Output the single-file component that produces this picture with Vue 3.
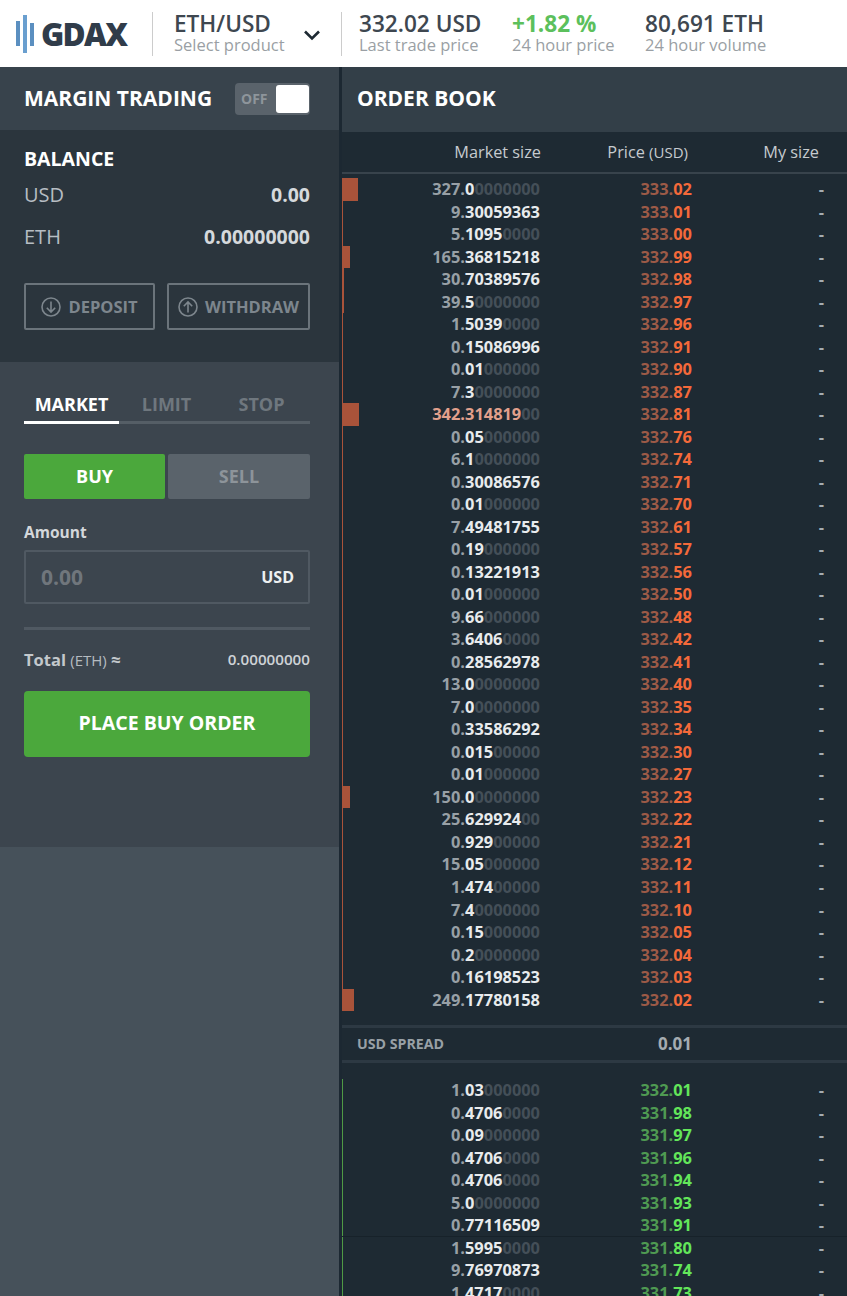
<template>
  <div class="page">
    <header class="topbar">
      <div class="logo">
        <svg class="logo-bars" width="18" height="38" viewBox="0 0 18 38">
          <rect x="0" y="6" width="4" height="25" fill="#5b8fc0" />
          <rect x="7" y="0" width="4" height="38" fill="#6a9fcf" />
          <rect x="14" y="8" width="4" height="23" fill="#5b8fc0" />
        </svg>
        <span class="logo-text">GDAX</span>
      </div>
      <div class="sep"></div>
      <div class="product">
        <div class="stat">
          <div class="stat-value">ETH/USD</div>
          <div class="stat-label">Select product</div>
        </div>
        <svg class="chevron" width="18" height="12" viewBox="0 0 18 12">
          <path d="M2 2.5 L9 9.5 L16 2.5" fill="none" stroke="#1e2a33" stroke-width="2.6" />
        </svg>
      </div>
      <div class="sep"></div>
      <div class="stat stat-price">
        <div class="stat-value">332.02 USD</div>
        <div class="stat-label">Last trade price</div>
      </div>
      <div class="stat stat-change">
        <div class="stat-value green">+1.82 %</div>
        <div class="stat-label">24 hour price</div>
      </div>
      <div class="stat">
        <div class="stat-value">80,691 ETH</div>
        <div class="stat-label">24 hour volume</div>
      </div>
    </header>

    <div class="main">
      <aside class="sidebar">
        <div class="margin-head">
          <span class="panel-title">MARGIN TRADING</span>
          <div class="toggle">
            <span>OFF</span>
            <div class="knob"></div>
          </div>
        </div>

        <section class="balance">
          <h3>BALANCE</h3>
          <div class="balance-row"><span>USD</span><b>0.00</b></div>
          <div class="balance-row"><span>ETH</span><b>0.00000000</b></div>
          <div class="balance-actions">
            <button class="outline deposit">
              <svg width="20" height="20" viewBox="0 0 20 20">
                <circle cx="10" cy="10" r="9" fill="none" stroke="#7d868d" stroke-width="1.6" />
                <path d="M10 4.5 V15 M5.8 10.8 L10 15 L14.2 10.8" fill="none" stroke="#7d868d" stroke-width="1.6" />
              </svg>
              DEPOSIT
            </button>
            <button class="outline withdraw">
              <svg width="20" height="20" viewBox="0 0 20 20">
                <circle cx="10" cy="10" r="9" fill="none" stroke="#7d868d" stroke-width="1.6" />
                <path d="M10 15.5 V5 M5.8 9.2 L10 5 L14.2 9.2" fill="none" stroke="#7d868d" stroke-width="1.6" />
              </svg>
              WITHDRAW
            </button>
          </div>
        </section>

        <section class="order-form">
          <div class="tabs">
            <div class="tab active">MARKET</div>
            <div class="tab">LIMIT</div>
            <div class="tab">STOP</div>
          </div>
          <div class="side-switch">
            <button class="side buy">BUY</button>
            <button class="side sell">SELL</button>
          </div>
          <label class="amount-label">Amount</label>
          <div class="amount">
            <span class="placeholder">0.00</span>
            <span class="unit">USD</span>
          </div>
          <div class="rule"></div>
          <div class="total">
            <span><b>Total</b> <small>(ETH)</small> <b class="approx">≈</b></span>
            <b class="total-value">0.00000000</b>
          </div>
          <button class="place">PLACE BUY ORDER</button>
        </section>
      </aside>

      <main class="book">
        <div class="book-title"><span class="panel-title">ORDER BOOK</span></div>
        <div class="book-cols">
          <span class="col-size">Market size</span>
          <span class="col-price">Price <small>(USD)</small></span>
          <span class="col-mine">My size</span>
        </div>

        <div class="rows asks">
          <div v-for="row in asks" :key="row.price" class="row" :class="{ flash: row.size.startsWith('342') }">
            <div class="bar" :style="{ width: barWidth(row.size) + 'px' }"></div>
            <span class="size">
              <i class="dim">{{ parts(row.size).whole }}</i>{{ parts(row.size).digits }}<i class="faint">{{ parts(row.size).zeros }}</i>
            </span>
            <span class="price"><i>{{ row.price.slice(0, 4) }}</i>{{ row.price.slice(4) }}</span>
            <span class="mine">-</span>
          </div>
        </div>

        <div class="spread">
          <span class="spread-label">USD SPREAD</span>
          <span class="spread-value">0.01</span>
        </div>

        <div class="rows bids">
          <div v-for="row in bids" :key="row.price" class="row" :class="{ seam: row.price === '331.80' }">
            <div class="bar" :style="{ width: barWidth(row.size) + 'px' }"></div>
            <span class="size">
              <i class="dim">{{ parts(row.size).whole }}</i>{{ parts(row.size).digits }}<i class="faint">{{ parts(row.size).zeros }}</i>
            </span>
            <span class="price"><i>{{ row.price.slice(0, 4) }}</i>{{ row.price.slice(4) }}</span>
            <span class="mine">-</span>
          </div>
        </div>
      </main>
    </div>
  </div>
</template>

<script setup>
const toRows = (list) => list.map(([size, price]) => ({ size, price }))

const asks = toRows([
  ['327.00000000', '333.02'],
  ['9.30059363', '333.01'],
  ['5.10950000', '333.00'],
  ['165.36815218', '332.99'],
  ['30.70389576', '332.98'],
  ['39.50000000', '332.97'],
  ['1.50390000', '332.96'],
  ['0.15086996', '332.91'],
  ['0.01000000', '332.90'],
  ['7.30000000', '332.87'],
  ['342.31481900', '332.81'],
  ['0.05000000', '332.76'],
  ['6.10000000', '332.74'],
  ['0.30086576', '332.71'],
  ['0.01000000', '332.70'],
  ['7.49481755', '332.61'],
  ['0.19000000', '332.57'],
  ['0.13221913', '332.56'],
  ['0.01000000', '332.50'],
  ['9.66000000', '332.48'],
  ['3.64060000', '332.42'],
  ['0.28562978', '332.41'],
  ['13.00000000', '332.40'],
  ['7.00000000', '332.35'],
  ['0.33586292', '332.34'],
  ['0.01500000', '332.30'],
  ['0.01000000', '332.27'],
  ['150.00000000', '332.23'],
  ['25.62992400', '332.22'],
  ['0.92900000', '332.21'],
  ['15.05000000', '332.12'],
  ['1.47400000', '332.11'],
  ['7.40000000', '332.10'],
  ['0.15000000', '332.05'],
  ['0.20000000', '332.04'],
  ['0.16198523', '332.03'],
  ['249.17780158', '332.02'],
])

const bids = toRows([
  ['1.03000000', '332.01'],
  ['0.47060000', '331.98'],
  ['0.09000000', '331.97'],
  ['0.47060000', '331.96'],
  ['0.47060000', '331.94'],
  ['5.00000000', '331.93'],
  ['0.77116509', '331.91'],
  ['1.59950000', '331.80'],
  ['9.76970873', '331.74'],
  ['1.47170000', '331.73'],
])

// whole part is dimmed, trailing zeros are almost invisible
const parts = (size) => {
  const [int, dec] = size.split('.')
  let digits = dec.replace(/0+$/, '')
  if (!digits) digits = '0'
  return { whole: int + '.', digits, zeros: dec.slice(digits.length) }
}

const barWidth = (size) => Math.max(1, Math.round(parseFloat(size) * 0.05))
</script>

<style>
html, body {
  margin: 0;
  overflow: hidden;
}
</style>

<style scoped>
.page {
  width: 847px;
  height: 1296px;
  overflow: hidden;
  font-family: "Open Sans", "Noto Sans", sans-serif;
  display: flex;
  flex-direction: column;
  background: #1e2a33;
}

.topbar {
  height: 67px;
  flex: none;
  background: #fff;
  display: flex;
  align-items: center;
  padding-left: 16px;
  box-sizing: border-box;
}

.logo {
  display: flex;
  align-items: center;
  width: 136px;
  flex: none;
}

.logo-bars {
  flex: none;
}

.logo-text {
  margin-left: 7px;
  font-size: 31.5px;
  font-weight: 800;
  letter-spacing: -1.7px;
  color: #303c4a;
}

.sep {
  width: 1px;
  height: 44px;
  background: #ccc;
  flex: none;
}

.product {
  display: flex;
  align-items: center;
  width: 188px;
  flex: none;
  padding-left: 21px;
  box-sizing: border-box;
}

.chevron {
  flex: none;
  margin-left: 18px;
  margin-top: 2px;
}

.stat {
  flex: none;
  margin-top: -2px;
}

.stat-price {
  margin-left: 17px;
  width: 153px;
}

.stat-change {
  width: 133px;
}

.stat-value {
  font-size: 22.6px;
  font-weight: 600;
  line-height: 24px;
  color: #3e4750;
  white-space: nowrap;
}

.stat-value.green {
  font-weight: 700;
  color: #5cc05c;
}

.stat-label {
  font-size: 16.5px;
  line-height: 18px;
  color: #9a9fa4;
  white-space: nowrap;
}

.main {
  flex: 1;
  display: flex;
  min-height: 0;
}

.sidebar {
  width: 339px;
  flex: none;
  background: #46515a;
  border-right: 3px solid #1c2832;
}

.panel-title {
  display: block;
  margin-bottom: 2px;
  line-height: 28px;
  font-size: 21px;
  font-weight: 700;
  color: #fff;
}

.margin-head {
  height: 63px;
  background: #38434c;
  display: flex;
  align-items: center;
  justify-content: space-between;
  padding: 0 29px 0 24px;
}

.toggle {
  width: 75px;
  height: 32px;
  background: #5a636b;
  border-radius: 4px;
  display: flex;
  align-items: center;
  justify-content: space-between;
  padding: 0 1px 0 6px;
  box-sizing: border-box;
  font-size: 14px;
  font-weight: 700;
  color: #8e959b;
}

.knob {
  width: 33px;
  height: 28px;
  background: #fff;
  border-radius: 3px;
}

.balance {
  height: 232px;
  box-sizing: border-box;
  background: #2b353d;
  padding: 16px 29px 0 24px;
}

.balance h3 {
  margin: 0 0 9px;
  font-size: 19.5px;
  line-height: 26px;
  font-weight: 700;
  color: #fff;
}

.balance-row {
  display: flex;
  justify-content: space-between;
  align-items: center;
  height: 26px;
  margin-bottom: 16px;
  font-size: 20px;
  color: #b6bdc3;
}

.balance-row b {
  font-size: 19.5px;
  font-weight: 700;
  color: #d5d9dc;
}

.balance-actions {
  display: flex;
  justify-content: space-between;
  margin-top: 34px;
}

.outline {
  height: 47px;
  background: none;
  border: 2px solid #6b747b;
  border-radius: 2px;
  display: flex;
  align-items: center;
  justify-content: center;
  gap: 7px;
  padding: 0;
  font-family: inherit;
  font-size: 16.5px;
  font-weight: 700;
  color: #7d868d;
}

.deposit {
  width: 131px;
}

.withdraw {
  width: 143px;
}

.order-form {
  height: 485px;
  box-sizing: border-box;
  background: #3c454e;
  padding: 28px 29px 0 24px;
}

.tabs {
  display: flex;
  border-bottom: 3px solid #555e66;
  height: 34px;
  box-sizing: border-box;
}

.tab {
  width: 95px;
  height: 34px;
  box-sizing: border-box;
  text-align: center;
  font-size: 18px;
  line-height: 28px;
  font-weight: 700;
  color: #6f777e;
}

.tab.active {
  color: #fff;
  border-bottom: 3px solid #fff;
}

.side-switch {
  display: flex;
  gap: 3px;
  margin-top: 30px;
}

.side {
  width: 141px;
  height: 45px;
  border: none;
  border-radius: 2px;
  font-family: inherit;
  font-size: 18px;
  font-weight: 700;
  padding: 0 0 2px;
}

.side.buy {
  background: #4ba83c;
  color: #fff;
}

.side.sell {
  width: 142px;
  background: #5a636b;
  color: #8d949a;
}

.amount-label {
  display: block;
  margin-top: 23px;
  font-size: 15.5px;
  line-height: 20px;
  font-weight: 700;
  color: #d4d7da;
}

.amount {
  margin-top: 8px;
  height: 54px;
  box-sizing: border-box;
  border: 2px solid #505962;
  border-radius: 2px;
  display: flex;
  align-items: center;
  justify-content: space-between;
  padding: 0 14px 0 15px;
}

.placeholder {
  font-size: 21px;
  font-weight: 700;
  color: #70767c;
}

.unit {
  font-size: 16px;
  font-weight: 700;
  color: #eef0f1;
}

.rule {
  height: 3px;
  margin-top: 23px;
  background: #505962;
}

.total {
  display: flex;
  justify-content: space-between;
  align-items: center;
  margin-top: 17px;
  height: 24px;
  font-size: 16.5px;
  color: #c3c8cc;
}

.total small {
  font-size: 15px;
  color: #b5bbc0;
}

.total .approx {
  font-size: 17px;
}

.total-value {
  font-size: 15.2px;
  font-weight: 600;
  color: #ced2d6;
}

.place {
  display: block;
  width: 100%;
  height: 66px;
  margin-top: 20px;
  background: #4ba83c;
  border: none;
  border-radius: 4px;
  font-family: inherit;
  font-size: 19.5px;
  font-weight: 700;
  color: #fff;
  padding: 0 0 3px;
}

.book {
  flex: 1;
  min-width: 0;
  background: #1e2a33;
}

.book-title {
  height: 65px;
  box-sizing: border-box;
  background: #333f48;
  display: flex;
  align-items: center;
  padding: 0 0 1px 15px;
}

.book-cols {
  height: 42px;
  box-sizing: border-box;
  padding-bottom: 1px;
  border-bottom: 2px solid #38434c;
  display: flex;
  align-items: center;
  font-size: 16.3px;
  color: #c6cbcf;
}

.book-cols small {
  font-size: 15px;
}

.col-size {
  width: 199px;
  text-align: right;
}

.col-price {
  width: 147px;
  text-align: right;
}

.col-mine {
  width: 131px;
  text-align: right;
}

.rows {
  margin: 0;
}

.asks {
  padding-top: 4px;
  height: 851px;
  box-sizing: border-box;
}

.row {
  position: relative;
  height: 22.53px;
  line-height: 22.53px;
  display: flex;
  font-size: 16.4px;
  font-weight: 700;
  white-space: nowrap;
  color: #e8ebed;
}

.row i {
  font-style: normal;
}

.bar {
  position: absolute;
  left: 0;
  top: 0;
  height: 100%;
  background: #a9533a;
}

.bids .bar {
  background: #4f9a45;
}

.size {
  width: 198px;
  text-align: right;
}

.dim {
  color: #98a0a6;
}

.faint {
  color: #444f58;
}

.flash .size,
.flash .dim {
  color: #e2a08c;
}

.price {
  width: 152px;
  text-align: right;
  color: #f4693a;
}

.price i {
  color: #9c5a47;
}

.bids .price {
  color: #63e65a;
}

.bids .price i {
  color: #4f9a52;
}

.mine {
  width: 132px;
  text-align: right;
  color: #a5acb1;
}

.seam {
  box-shadow: 0 -1px 0 #17222a;
}

.spread {
  height: 38px;
  box-sizing: border-box;
  padding: 0 0 2px 15px;
  border-top: 3px solid #2d3943;
  border-bottom: 3px solid #2d3943;
  display: flex;
  align-items: center;
}

.spread-label {
  width: 183px;
  font-size: 14.2px;
  font-weight: 700;
  color: #98a0a6;
}

.spread-value {
  width: 152px;
  text-align: right;
  font-size: 17px;
  font-weight: 700;
  color: #a5acb1;
}

.bids {
  padding-top: 16px;
}
</style>
